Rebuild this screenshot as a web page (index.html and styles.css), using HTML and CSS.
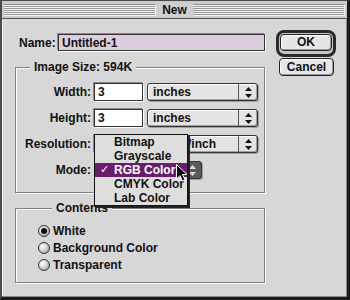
FILE: index.html
```html
<!DOCTYPE html>
<html lang="en">
<head>
    <meta charset="UTF-8">
    <title>New</title>
    <link rel="stylesheet" href="styles.css">
</head>
<body>
    <div class="window">
        <div class="titlebar">
            <span class="stripes"></span>
            <span class="title">New</span>
            <span class="stripes"></span>
        </div>
        <div class="content">
            <div class="main">
                <div class="name-row">
                    <label for="name">Name:</label>
                    <input type="text" id="name" class="name-input" value="Untitled-1">
                </div>

                <fieldset class="group size-group">
                    <legend>Image Size: 594K</legend>
                    <div class="row">
                        <span class="lbl">Width:</span>
                        <span class="field">3</span>
                        <span class="popup">inches<span class="arrows"><svg width="7" height="11" viewBox="0 0 7 11"><polygon points="0,4 3.5,0 7,4"/><polygon points="0,7 3.5,11 7,7"/></svg></span></span>
                    </div>
                    <div class="row">
                        <span class="lbl">Height:</span>
                        <span class="field">3</span>
                        <span class="popup">inches<span class="arrows"><svg width="7" height="11" viewBox="0 0 7 11"><polygon points="0,4 3.5,0 7,4"/><polygon points="0,7 3.5,11 7,7"/></svg></span></span>
                    </div>
                    <div class="row">
                        <span class="lbl">Resolution:</span>
                        <span class="field"></span>
                        <span class="popup popup-res">/inch<span class="arrows"><svg width="7" height="11" viewBox="0 0 7 11"><polygon points="0,4 3.5,0 7,4"/><polygon points="0,7 3.5,11 7,7"/></svg></span></span>
                    </div>
                    <div class="row row-mode">
                        <span class="lbl">Mode:</span>
                        <span class="popup popup-mode"><span class="arrows"><svg width="7" height="11" viewBox="0 0 7 11"><polygon points="0,4 3.5,0 7,4"/><polygon points="0,7 3.5,11 7,7"/></svg></span></span>
                    </div>
                </fieldset>

                <fieldset class="group contents-group">
                    <legend>Contents</legend>
                    <div class="radio-row"><span class="radio checked"></span>White</div>
                    <div class="radio-row"><span class="radio"></span>Background Color</div>
                    <div class="radio-row"><span class="radio"></span>Transparent</div>
                </fieldset>
            </div>

            <div class="buttons">
                <div class="default-ring"><button class="btn">OK</button></div>
                <button class="btn btn-cancel">Cancel</button>
            </div>
        </div>

        <!-- mode popup menu, open -->
        <ul class="menu">
            <li>Bitmap</li>
            <li>Grayscale</li>
            <li class="active"><span class="check">✓</span>RGB Color</li>
            <li>CMYK Color</li>
            <li>Lab Color</li>
        </ul>
        <svg class="cursor" width="12" height="18" viewBox="0 0 12 18">
            <path d="M0.5,0.5 L0.5,15 L4,11.5 L6.5,17 L9,16 L6.5,10.5 L11,10.5 Z" fill="#000" stroke="#fff" stroke-width="1"/>
        </svg>
    </div>
</body>
</html>
```

FILE: styles.css
```css
* {
    margin: 0;
    padding: 0;
    box-sizing: border-box;
}
body {
    width: 350px;
    height: 300px;
    background: #1a1a1a;
    font-family: "Liberation Sans", Arial, sans-serif;
    font-weight: bold;
    font-size: 12px;
    color: #111;
}
.window {
    position: relative;
    width: 350px;
    height: 300px;
    background: #d7d7d7;
    border-top: 1px solid #4a4a4a;
    border-left: 2px solid #4a4a4a;
    border-right: 3px solid #1a1a1a;
    border-bottom: 3px solid #1a1a1a;
    box-shadow: inset -1px -1px 0 #8a8a8a, inset 1px 0 0 #f2f2f2;
}
.titlebar {
    height: 18px;
    display: flex;
    align-items: center;
    padding: 0 2px 0 2px;
    background: #cbcbcb;
    border-bottom: 1px solid #555;
}
.stripes {
    flex: 1;
    height: 12px;
    background: repeating-linear-gradient(to bottom, #f4f4f4 0 1px, #979797 1px 2px);
    border-top: 1px solid #8c8c8c;
    border-right: 1px solid #f4f4f4;
}
.title {
    padding: 0 6px;
    line-height: 14px;
    background: #cfcfcf;
}
.content {
    display: grid;
    grid-template-columns: 250px 60px;
    column-gap: 11px;
    padding: 11px 0 0 13px;
}
.main {
    padding-top: 4px;
}
.name-row {
    display: flex;
    align-items: center;
    height: 17px;
    padding-left: 4px;
}
.name-input {
    margin-left: auto;
    width: 207px;
    height: 17px;
    border: 1px solid #333;
    box-shadow: -1px -1px 0 #8a8a8a, 1px 1px 0 #fff;
    background: #dccde0;
    font: bold 12px "Liberation Sans", Arial, sans-serif;
    color: #111;
    padding: 0 3px;
    outline: none;
}
.group {
    width: 250px;
    min-inline-size: 0;
    border: 1px solid #808080;
    box-shadow: inset 1px 1px 0 #fff, 1px 1px 0 #fff;
}
.group legend {
    margin-left: 14px;
    padding: 0 4px;
    line-height: 14px;
    background: #d7d7d7;
}
.size-group {
    margin-top: 9px;
    padding: 9px 0 13px 0;
}
.row {
    display: grid;
    grid-template-columns: 78px 49px 115px;
    height: 18px;
    align-items: center;
    margin-bottom: 8px;
}
.row:last-child {
    margin-bottom: 0;
}
.row-mode {
    grid-template-columns: 78px 108px;
}
.lbl {
    text-align: right;
    padding-right: 3px;
}
.field {
    height: 18px;
    border: 1px solid #333;
    box-shadow: -1px -1px 0 #8a8a8a, 1px 1px 0 #fff;
    background: #fff;
    padding-left: 3px;
    line-height: 16px;
}
.popup {
    margin-left: 4px;
    height: 18px;
    border: 1px solid #333;
    border-radius: 3px;
    background: #e4e4e4;
    box-shadow: inset 1px 1px 0 #fff, inset -1px -1px 0 #a0a0a0, 1px 1px 0 #a0a0a0;
    line-height: 16px;
    padding-left: 5px;
    display: flex;
}
.popup-res {
    padding-left: 40px;
}
.arrows {
    margin-left: auto;
    width: 19px;
    border-left: 1px solid #555;
    display: flex;
    align-items: center;
    justify-content: center;
}
.arrows svg {
    fill: #111;
}
.popup-mode {
    margin-left: 0;
    background: #5a5a5a;
    box-shadow: 1px 1px 0 #a0a0a0;
}
.popup-mode .arrows {
    width: 17px;
    border-left: none;
}
.popup-mode .arrows svg {
    fill: #ddd;
}
.contents-group {
    margin-top: 8px;
    padding: 7px 0 9px 22px;
}
.radio-row {
    display: flex;
    align-items: center;
    height: 17px;
    gap: 3px;
}
.radio {
    width: 12px;
    height: 12px;
    border: 1px solid #333;
    border-radius: 50%;
    background: radial-gradient(circle at 35% 35%, #ffffff 0, #d4d4d4 45%, #8c8c8c 100%);
    display: flex;
    align-items: center;
    justify-content: center;
}
.radio.checked::after {
    content: "";
    width: 6px;
    height: 6px;
    border-radius: 50%;
    background: #111;
}
.buttons {
    display: flex;
    flex-direction: column;
    align-items: flex-start;
}
.default-ring {
    width: 60px;
    height: 27px;
    border: 3px solid #2a2a2a;
    border-radius: 8px;
    padding: 1px;
    background: #c4c4c4;
}
.btn {
    display: block;
    width: 100%;
    height: 17px;
    border: 1px solid #222;
    border-radius: 4px;
    background: #e6e6e6;
    box-shadow: inset 1px 1px 0 #fff, inset -1px -1px 0 #999;
    font: bold 12px "Liberation Sans", Arial, sans-serif;
    color: #111;
    line-height: 15px;
}
.btn-cancel {
    width: 55px;
    height: 18px;
    margin: 1px 0 0 3px;
}
.menu {
    position: absolute;
    left: 92px;
    top: 133px;
    width: 94px;
    list-style: none;
    background: #dedede;
    border: 1px solid #111;
    box-shadow: 2px 2px 0 #222;
    padding: 0;
}
.menu li {
    height: 14px;
    line-height: 14px;
    padding-left: 19px;
    position: relative;
}
.menu li.active {
    background: #6b1d6d;
    color: #fff;
}
.check {
    position: absolute;
    left: 5px;
    top: 0;
    font-family: "DejaVu Sans", sans-serif;
    font-size: 11px;
}
.cursor {
    position: absolute;
    left: 174px;
    top: 163px;
}
```
